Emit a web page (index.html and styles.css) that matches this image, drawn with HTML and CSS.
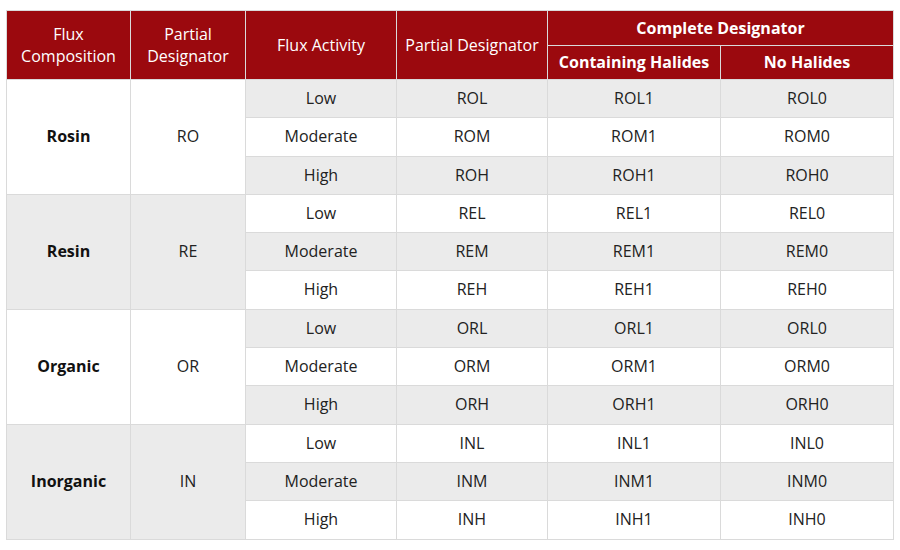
FILE: index.html
```html
<!DOCTYPE html>
<html>
<head>
<meta charset="utf-8">
<link rel="stylesheet" href="styles.css">
</head>
<body>
<div class="wrap">
<table class="flux">
  <colgroup>
    <col class="c1"><col class="c2"><col class="c3"><col class="c4"><col class="c5"><col class="c6">
  </colgroup>
  <thead>
    <tr>
      <th rowspan="2">Flux<br>Composition</th>
      <th rowspan="2">Partial<br>Designator</th>
      <th rowspan="2">Flux Activity</th>
      <th rowspan="2">Partial Designator</th>
      <th colspan="2" class="strong">Complete Designator</th>
    </tr>
    <tr>
      <th class="strong">Containing Halides</th>
      <th class="strong">No Halides</th>
    </tr>
  </thead>
  <tbody>
    <tr class="g"><td rowspan="3" class="name w">Rosin</td><td rowspan="3" class="w">RO</td><td>Low</td><td>ROL</td><td>ROL1</td><td>ROL0</td></tr>
    <tr><td>Moderate</td><td>ROM</td><td>ROM1</td><td>ROM0</td></tr>
    <tr class="g"><td>High</td><td>ROH</td><td>ROH1</td><td>ROH0</td></tr>

    <tr><td rowspan="3" class="name gc">Resin</td><td rowspan="3" class="gc">RE</td><td>Low</td><td>REL</td><td>REL1</td><td>REL0</td></tr>
    <tr class="g"><td>Moderate</td><td>REM</td><td>REM1</td><td>REM0</td></tr>
    <tr><td>High</td><td>REH</td><td>REH1</td><td>REH0</td></tr>

    <tr class="g"><td rowspan="3" class="name w">Organic</td><td rowspan="3" class="w">OR</td><td>Low</td><td>ORL</td><td>ORL1</td><td>ORL0</td></tr>
    <tr><td>Moderate</td><td>ORM</td><td>ORM1</td><td>ORM0</td></tr>
    <tr class="g"><td>High</td><td>ORH</td><td>ORH1</td><td>ORH0</td></tr>

    <tr><td rowspan="3" class="name gc">Inorganic</td><td rowspan="3" class="gc">IN</td><td>Low</td><td>INL</td><td>INL1</td><td>INL0</td></tr>
    <tr class="g"><td>Moderate</td><td>INM</td><td>INM1</td><td>INM0</td></tr>
    <tr><td>High</td><td>INH</td><td>INH1</td><td>INH0</td></tr>
  </tbody>
</table>
</div>
</body>
</html>
```

FILE: styles.css
```css
html, body {
  margin: 0;
  padding: 0;
  background: #ffffff;
}
.wrap {
  padding: 10px 0 0 6px;
}
.flux {
  border-collapse: collapse;
  table-layout: fixed;
  width: 887px;
  font-family: "Open Sans", "Liberation Sans", sans-serif;
  font-size: 16px;
  color: #222222;
}
.c1 { width: 124px; }
.c2 { width: 115px; }
.c3 { width: 151px; }
.c4 { width: 151px; }
.c5 { width: 173px; }
.c6 { width: 173px; }
.flux th, .flux td {
  border: 1px solid #dadada;
  text-align: center;
  vertical-align: middle;
}
.flux th {
  background: #9b090e;
  color: #ffffff;
  font-weight: 400;
  line-height: 22px;
  padding: 5.75px 4px;
}
.flux th.strong {
  font-weight: 700;
}
.flux td {
  line-height: 21.3px;
  padding: 8px 4px;
  background: #ffffff;
}
.flux tr.g td {
  background: #ebebeb;
}
.flux tr td.w {
  background: #ffffff;
}
.flux tr td.gc {
  background: #ebebeb;
}
.flux td.name {
  font-weight: 700;
  color: #111111;
}
```
